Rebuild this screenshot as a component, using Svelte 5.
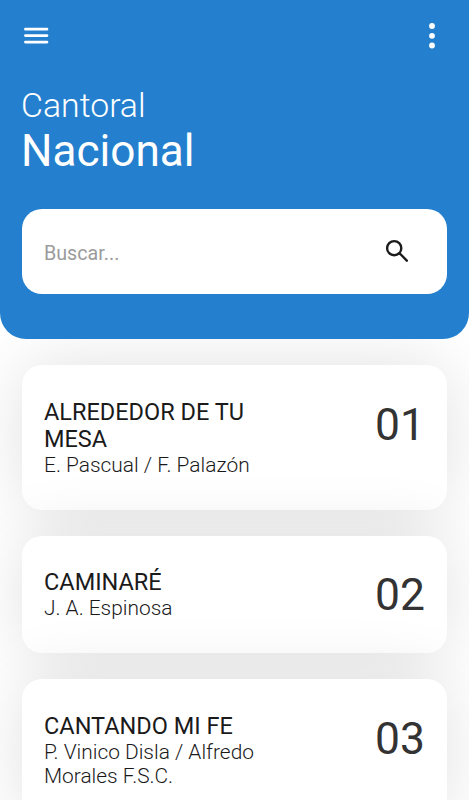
<script>
  const songs = [
    { number: '01', title: 'ALREDEDOR DE TU MESA', author: 'E. Pascual / F. Palazón' },
    { number: '02', title: 'CAMINARÉ', author: 'J. A. Espinosa' },
    { number: '03', title: 'CANTANDO MI FE', author: 'P. Vinico Disla / Alfredo Morales F.S.C.' }
  ];
</script>

<div class="screen">
  <header>
    <div class="bar">
      <button aria-label="Menú">
        <svg width="26" height="20" viewBox="0 0 26 20">
          <path d="M2.4 3.2h21.6M2.4 9.6h21.6M2.4 16.1h21.6" stroke="#fff" stroke-width="2.7" stroke-linecap="round" />
        </svg>
      </button>
      <button aria-label="Opciones">
        <svg width="8" height="28" viewBox="0 0 8 28">
          <circle cx="4" cy="4" r="2.9" /><circle cx="4" cy="13.8" r="2.9" /><circle cx="4" cy="23.5" r="2.9" />
        </svg>
      </button>
    </div>
    <h1><span>Cantoral</span><strong>Nacional</strong></h1>
    <div class="search">
      <input type="text" placeholder="Buscar..." aria-label="Buscar" />
      <svg width="31" height="31" viewBox="0 0 31 31" fill="none" stroke="#1c1c1c" stroke-width="2.4">
        <ellipse cx="13.2" cy="12.2" rx="7.1" ry="7.1" />
        <path d="M18.4 17.4l1.4 1.1 6 6.2" stroke-linecap="round" stroke-linejoin="round" />
      </svg>
    </div>
  </header>
  <main>
    {#each songs as song}
      <article>
        <div class="info">
          <h2>{song.title}</h2>
          <p>{song.author}</p>
        </div>
        <div class="number">{song.number}</div>
      </article>
    {/each}
  </main>
</div>

<style>
  .screen {
    display: flex;
    flex-direction: column;
    height: 800px;
    overflow: hidden;
    background: #fff;
    font-family: Roboto, "Liberation Sans", sans-serif;
  }
  header {
    position: relative;
    z-index: 1;
    flex: none;
    box-sizing: border-box;
    height: 339px;
    padding: 21px 22px 0;
    border-radius: 0 0 26px 26px;
    background: #2480ce;
    color: #fff;
  }
  .bar {
    display: flex;
    justify-content: space-between;
    align-items: center;
    height: 29px;
    padding: 0 11px 0 1px;
  }
  button {
    display: flex;
    padding: 0;
    border: 0;
    background: none;
  }
  circle {
    fill: #fff;
  }
  h1 {
    display: flex;
    flex-direction: column;
    margin: 35px 0 0 -1px;
  }
  h1 span {
    font-size: 33.8px;
    line-height: 41px;
    font-weight: 300;
  }
  h1 strong {
    font-size: 44.1px;
    line-height: 51px;
    font-weight: 400;
  }
  .search {
    display: flex;
    align-items: center;
    box-sizing: border-box;
    height: 85px;
    margin-top: 32px;
    padding: 0 35px 0 22px;
    border-radius: 20px;
    background: #fff;
  }
  input {
    flex: 1;
    min-width: 0;
    padding: 4px 0 0;
    border: 0;
    outline: 0;
    background: none;
    font: 400 19.7px/24px Roboto, "Liberation Sans", sans-serif;
  }
  input::placeholder {
    color: #9b9b9b;
    opacity: 1;
  }
  main {
    display: flex;
    flex-direction: column;
    gap: 26px;
    padding: 26px 22px;
  }
  article {
    display: flex;
    justify-content: space-between;
    align-items: flex-start;
    padding: 33.5px 22px 32px;
    border-radius: 20px;
    background: #fff;
    box-shadow: 0 0 66px rgba(0, 0, 0, 0.12);
  }
  .info {
    width: 226px;
    color: #1a1a1a;
  }
  h2 {
    margin: 0;
    font-size: 23.5px;
    line-height: 27.6px;
    font-weight: 400;
  }
  p {
    margin: -0.7px 0 0;
    font-size: 20.9px;
    line-height: 24.6px;
    font-weight: 300;
  }
  .number {
    font-size: 44.4px;
    line-height: 52px;
    font-weight: 400;
    color: #333;
  }
</style>
